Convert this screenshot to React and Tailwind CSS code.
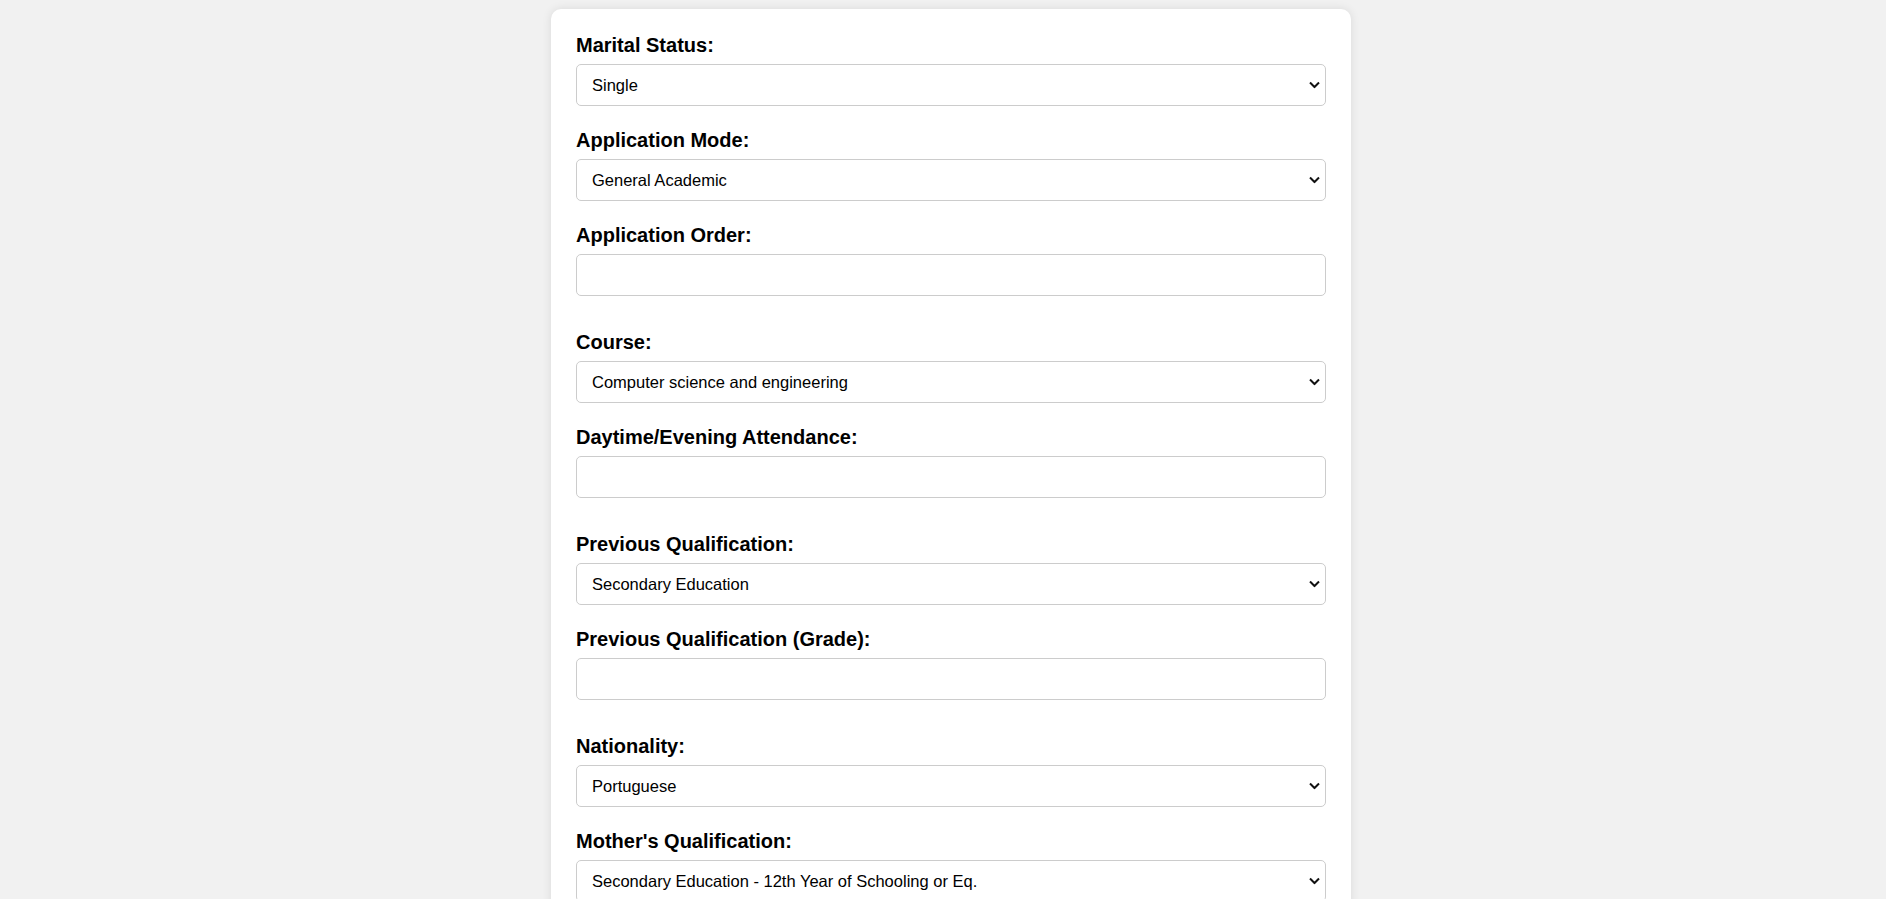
import React from "react";

const Chevron = () => (
  <svg
    className="pointer-events-none absolute right-[6px] top-1/2 -translate-y-1/2"
    width="11"
    height="7"
    viewBox="0 0 11 7"
    fill="none"
  >
    <path d="M1 1l4.5 4.5L10 1" stroke="#111" strokeWidth="2" />
  </svg>
);

function SelectField({ label, options, value }) {
  return (
    <div className="mb-[23px]">
      <label className="block text-[20px] font-bold leading-[23px] mb-[7px] text-black">{label}</label>
      <div className="relative">
        <select
          defaultValue={value}
          className="block w-full h-[42px] appearance-none rounded-[5px] border border-[#cccccc] bg-white pl-[15px] pr-8 pt-[1px] text-[16.5px] text-black outline-none"
          style={{ fontFamily: '"Liberation Sans", Arial, sans-serif' }}
        >
          {options.map((o) => (
            <option key={o} value={o}>
              {o}
            </option>
          ))}
        </select>
        <Chevron />
      </div>
    </div>
  );
}

function InputField({ label }) {
  return (
    <div className="mb-[35px]">
      <label className="block text-[20px] font-bold leading-[23px] mb-[7px] text-black">{label}</label>
      <input
        type="number"
        className="block w-full h-[42px] rounded-[5px] border border-[#cccccc] bg-white px-[15px] text-[16px] outline-none"
      />
    </div>
  );
}

export default function App() {
  return (
    <div
      className="h-[899px] w-full overflow-hidden bg-[#f1f1f1] pl-4 pt-[9px] flex justify-center"
      style={{ fontFamily: '"Liberation Sans", Arial, sans-serif' }}
    >
      <div className="w-[800px] shrink-0 self-start rounded-[10px] bg-white px-[25px] pt-[25px] pb-[25px] shadow-[0_0_10px_rgba(0,0,0,0.1)]">
        <SelectField label="Marital Status:" value="Single" options={["Single", "Married", "Widower", "Divorced", "Facto Union", "Legally Separated"]} />
        <SelectField label="Application Mode:" value="General Academic" options={["General Academic", "Special Contingent", "International Student", "Transfer", "Change of Course"]} />
        <InputField label="Application Order:" />
        <SelectField label="Course:" value="Computer science and engineering" options={["Computer science and engineering", "Electrical engineering", "Mechanical engineering", "Management", "Nursing"]} />
        <InputField label="Daytime/Evening Attendance:" />
        <SelectField label="Previous Qualification:" value="Secondary Education" options={["Secondary Education", "Higher Education - Bachelor's Degree", "Higher Education - Degree", "Higher Education - Master's", "Higher Education - Doctorate"]} />
        <InputField label="Previous Qualification (Grade):" />
        <SelectField label="Nationality:" value="Portuguese" options={["Portuguese", "German", "Spanish", "Italian", "Dutch", "English", "Brazilian"]} />
        <SelectField label="Mother's Qualification:" value="Secondary Education - 12th Year of Schooling or Eq." options={["Secondary Education - 12th Year of Schooling or Eq.", "Higher Education - Bachelor's Degree", "Higher Education - Degree", "Higher Education - Master's", "Higher Education - Doctorate"]} />
        <SelectField label="Father's Qualification:" value="Secondary Education - 12th Year of Schooling or Eq." options={["Secondary Education - 12th Year of Schooling or Eq.", "Higher Education - Bachelor's Degree", "Higher Education - Degree", "Higher Education - Master's", "Higher Education - Doctorate"]} />
      </div>
    </div>
  );
}
